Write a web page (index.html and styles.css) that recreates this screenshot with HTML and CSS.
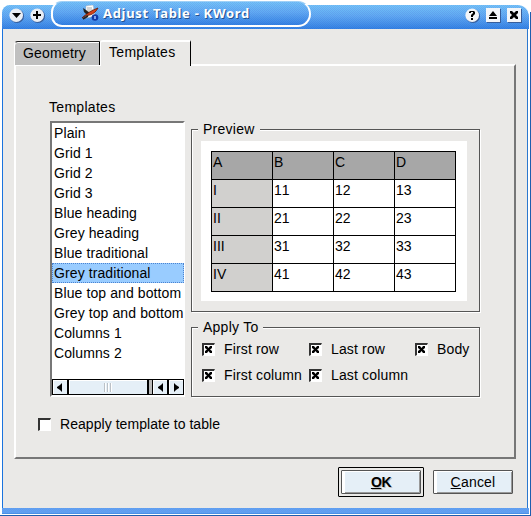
FILE: index.html
```html
<!DOCTYPE html>
<html lang="en">
<head>
<meta charset="utf-8">
<title>Adjust Table - KWord</title>
<link rel="stylesheet" href="styles.css">
</head>
<body>
<div class="window">
  <header class="titlebar">
    <div class="strip"></div>
    <div class="controls left">
      <svg width="15" height="15" viewBox="0 0 15 15"><circle cx="8" cy="8" r="7" fill="#365d9b"/><circle cx="7.2" cy="7.2" r="6.8" fill="#e9eef5"/><path d="M3 5h9L7.500 10z"/></svg>
      <svg width="15" height="15" viewBox="0 0 15 15"><circle cx="8" cy="8" r="7" fill="#365d9b"/><circle cx="7.200" cy="7.200" r="6.800" fill="#e9eef5"/><path d="M3 6h3V3h2v3h3v2H8v3H6V8H3z"/></svg>
    </div>
    <div class="caption">
      <svg class="appicon" width="17" height="16" viewBox="0 0 17 16"><path d="M4 1l7-1 2 11-9 2z" fill="#fff" stroke="#bbb" stroke-width=".5"/><path d="M5 3h5M5 5h6M6 7h5" stroke="#aaa"/><path d="M1 3l3 2 4 3-2 3-4-4z" fill="#222"/><path d="M0 13C4 9 10 5 16 3c-2 4-5 6-8 7-3 0-5 1-8 3z" fill="#d5421b" stroke="#651c08" stroke-width=".8"/><path d="M1 14l5-3" stroke="#222" stroke-width="1.500"/><circle cx="13" cy="12.500" r="3.300" fill="#123aa7"/><path d="M12 11h2v3h-2z" fill="#7da2ee"/></svg>
      <span class="title">Adjust Table - KWord</span>
    </div>
    <div class="controls right">
      <svg width="15" height="15" viewBox="0 0 15 15"><circle cx="8" cy="8" r="7" fill="#365d9b"/><circle cx="7.200" cy="7.200" r="6.800" fill="#f3f5f8"/><path d="M4 5V4l1-1h4l1 1v2L8 8v1H6V7l2-2V4H6v1zM6 10h2v2H6z"/></svg>
      <svg width="15" height="15" viewBox="0 0 15 15"><path d="M1 1h14v14H1z" fill="#365d9b"/><path d="M0 0h14v14H0z" fill="#f3f5f8"/><path d="M3 8l4-5 4 5zM3 9h8v2H3z"/></svg>
      <svg width="15" height="15" viewBox="0 0 15 15"><path d="M1 1h14v14H1z" fill="#365d9b"/><path d="M0 0h14v14H0z" fill="#f3f5f8"/><path d="M3 3h2l2 2 2-2h2v2L9 7l2 2v2H9L7 9l-2 2H3V9l2-2-2-2z"/></svg>
    </div>
  </header>

  <main class="client">
    <nav class="tabs">
      <div class="tab inactive"><span class="t-geo">Geometry</span></div>
      <div class="tab active"><span class="t-tpl">Templates</span></div>
    </nav>
    <section class="page">
      <div class="columns">
        <div class="listcol">
          <div class="listlabel">Templates</div>
          <div class="list">
            <ul>
              <li>Plain</li><li>Grid 1</li><li>Grid 2</li><li>Grid 3</li>
              <li>Blue heading</li><li>Grey heading</li><li>Blue traditional</li>
              <li class="selected">Grey traditional</li>
              <li>Blue top and bottom</li><li>Grey top and bottom</li>
              <li>Columns 1</li><li>Columns 2</li>
            </ul>
            <div class="scrollbar">
              <div class="sb btn"><svg width="5" height="9" viewBox="0 0 5 9"><path d="M5 0v9L3 7 0 5V4l3-2z"/></svg></div>
              <div class="sb thumb"><i></i><i></i><i></i></div>
              <div class="sb trough"></div>
              <div class="sb btn"><svg width="5" height="9" viewBox="0 0 5 9"><path d="M5 0v9L3 7 0 5V4l3-2z"/></svg></div>
              <div class="sb btn"><svg width="5" height="9" viewBox="0 0 5 9"><path d="M0 0v9l2-2 3-2V4L2 2z"/></svg></div>
            </div>
          </div>
        </div>
        <div class="rightcol">
          <div class="group preview">
            <div class="legend">Preview</div>
            <div class="canvas">
              <table>
                <tr><th>A</th><th>B</th><th>C</th><th>D</th></tr>
                <tr><td class="side">I</td><td>11</td><td>12</td><td>13</td></tr>
                <tr><td class="side">II</td><td>21</td><td>22</td><td>23</td></tr>
                <tr><td class="side">III</td><td>31</td><td>32</td><td>33</td></tr>
                <tr><td class="side">IV</td><td>41</td><td>42</td><td>43</td></tr>
              </table>
            </div>
          </div>
          <div class="group apply">
            <div class="legend">Apply To</div>
            <div class="checks">
              <div class="check"><b class="box"><svg width="7" height="7" viewBox="0 0 7 7"><path d="M0 0h2l1.500 2L5 0h2v2L5 3.500 7 5v2H5L3.500 5 2 7H0V5l2-1.500L0 2z"/></svg></b><span>First row</span></div>
              <div class="check"><b class="box"><svg width="7" height="7" viewBox="0 0 7 7"><path d="M0 0h2l1.500 2L5 0h2v2L5 3.500 7 5v2H5L3.500 5 2 7H0V5l2-1.500L0 2z"/></svg></b><span>Last row</span></div>
              <div class="check"><b class="box"><svg width="7" height="7" viewBox="0 0 7 7"><path d="M0 0h2l1.500 2L5 0h2v2L5 3.500 7 5v2H5L3.500 5 2 7H0V5l2-1.500L0 2z"/></svg></b><span>Body</span></div>
              <div class="check"><b class="box"><svg width="7" height="7" viewBox="0 0 7 7"><path d="M0 0h2l1.500 2L5 0h2v2L5 3.500 7 5v2H5L3.500 5 2 7H0V5l2-1.500L0 2z"/></svg></b><span>First column</span></div>
              <div class="check"><b class="box"><svg width="7" height="7" viewBox="0 0 7 7"><path d="M0 0h2l1.500 2L5 0h2v2L5 3.500 7 5v2H5L3.500 5 2 7H0V5l2-1.500L0 2z"/></svg></b><span>Last column</span></div>
            </div>
          </div>
        </div>
      </div>
      <div class="check reapply"><b class="box"></b><span>Reapply template to table</span></div>
    </section>
    <footer class="buttons">
      <div class="default"><div class="button ok"><span><u>O</u>K</span></div></div>
      <div class="button"><span><u>C</u>ancel</span></div>
    </footer>
  </main>
  <div class="bottomedge"></div>
</div>
</body>
</html>
```
FILE: styles.css
```css
* { box-sizing: border-box; }
body { margin: 0; background: #fff; color: #000; font: 14px/20px "Liberation Sans", sans-serif; letter-spacing: .1px; overflow: hidden; }
svg { display: block; }
span { white-space: nowrap; }

.window { width: 531px; height: 516px; padding-left: 2px; border-bottom: 1px solid #1e5eae; background: linear-gradient(#1e5eae, #1e5eae) 530px 12px / 1px 504px no-repeat; }

.titlebar { position: relative; height: 29px; display: flex; }
.strip, .caption {
  background-image:
    repeating-conic-gradient(rgba(90,110,215,.2) 0 25%, rgba(110,210,255,.12) 0 50%),
    linear-gradient(#74c4f8, #5ea8f2 45%, #2a7be0);
  background-size: 2px 2px, 100% 100%;
}
.strip { position: absolute; left: 0; right: 1px; top: 5px; bottom: 0; border-radius: 8px 12px 0 0; border-right: 1px solid #fff; }
.controls { position: relative; display: flex; }
.left { padding: 8px 0 0 7px; gap: 6px; width: 49px; }
.right { padding: 8px 0 0 154px; gap: 6px; }
.caption { position: relative; width: 260px; height: 26px; margin-top: 1px; border: 2px solid #fff; border-top: 1px solid #9fd0f6; border-radius: 11px 13px 13px 11px; display: flex; padding: 3px 0 0 29px; }
.title { margin-left: 4px; font: bold 13px/17px "Noto Sans", sans-serif; letter-spacing: .7px; color: #fff; text-shadow: 1px 1px 0 #24528f; }

.client { width: 526px; height: 479px; background: #eae9e7; border-left: 1px solid #1a73de; border-right: 1px solid #2b78cf; padding: 11px 11px 0; }
.bottomedge { width: 527px; height: 6px; background: repeating-conic-gradient(#6b8fee 0 25%, #55aef2 0 50%) 0 0 / 2px 2px; border-bottom: 1px solid #4a90e6; }

.tabs { display: flex; height: 26px; align-items: flex-start; margin-bottom: -2px; }
.tab { padding-left: 8px; }
.inactive { margin-top: 1px; width: 86px; height: 24px; background: #c0c0c0; border-left: 1px solid #fff; border-top: 1px solid #222; border-right: 1px solid #000; border-radius: 4px 0 0 0; line-height: 23px; box-shadow: inset 0 1px 0 #fff; }
.active { position: relative; width: 91px; height: 26px; background: #eae9e7; border-top: 2px solid #fff; border-left: 1px solid #fff; border-right: 1px solid #000; border-radius: 3px 0 0 0; line-height: 20px; letter-spacing: .3px; }
.t-geo { letter-spacing: .2px; }

.page { width: 502px; height: 395px; border: 2px solid; border-color: #fff #777 #777 #fff; padding: 29px 0 0 22px; }
.columns { display: flex; height: 302px; padding-left: 12px; gap: 6px; }
.listlabel { height: 26px; line-height: 24px; margin-left: -1px; letter-spacing: .3px; }
.list { width: 135px; height: 276px; background: #fff; border: 2px solid; border-color: #777 #fff #fff #777; }
ul { margin: 0; padding: 0; list-style: none; width: 132px; height: 256px; overflow: hidden; }
li { height: 20px; line-height: 21px; padding-left: 2px; white-space: nowrap; }
.selected { background: #99ccff; outline: 1px dotted #4c83d0; outline-offset: -1px; }
.scrollbar { display: flex; height: 16px; width: 132px; border: 1px solid #000; background: #e5eff7; }
.sb { display: flex; align-items: center; justify-content: center; border-right: 2px solid #000; box-shadow: inset 1px 1px 0 #fff; }
.btn { width: 16px; }
.btn:last-child { width: 14px; border: 0; }
.thumb { width: 81px; gap: 1px; }
.thumb i { width: 2px; height: 9px; background: #bbc1c7; border-right: 1px solid #fff; }
.trough { width: 4px; background: #bbb; border-right-width: 1px; box-shadow: none; }

.rightcol { width: 290px; padding-top: 34px; }
.group { border: 1px solid #555; box-shadow: inset 1px 1px 0 #fff, 1px 1px 0 #fff; width: 289px; }
.legend { width: max-content; height: 20px; margin: -11px 0 0 6px; padding: 0 5px; background: #eae9e7; letter-spacing: .25px; }
.preview { height: 183px; }
.canvas { width: 266px; height: 160px; margin: 2px 0 0 9px; background: #fff; padding: 10px; }
table { border-collapse: collapse; table-layout: fixed; width: 245px; height: 141px; }
tr { height: 28px; }
th, td { height: 28px; width: 61px; border: 1px solid #000; padding: 1px 0 0 1px; text-align: left; vertical-align: top; font-weight: normal; line-height: 18px; font-kerning: none; letter-spacing: 0; }
th { background: #a7a7a7; }
.side { background: #d1d0ce; }
.apply { height: 70px; margin-top: 15px; }
.checks { display: grid; grid-template-columns: 107px 106px 65px; grid-auto-rows: 26px; margin: -1px 0 0 10px; }
.check { display: flex; align-items: center; gap: 9px; height: 26px; }
.apply .check { letter-spacing: .15px; }
.box { flex: none; width: 13px; height: 13px; background: #fff; border: solid; border-width: 2px 1px 1px 2px; border-color: #333 #fff #fff #333; padding: 1px 0 0 1px; }
.reapply { height: 20px; margin-top: 17px; letter-spacing: .05px; }

.buttons { display: flex; justify-content: flex-end; align-items: center; gap: 9px; padding: 8px 3px 0 0; }
.default { border: 1px solid #000; padding: 2px; width: 86px; height: 30px; border-radius: 1px; }
.button { width: 80px; height: 24px; border: 1px solid #555; border-radius: 1px; box-shadow: inset 3px 1px 0 #fff, inset -1px -1px 0 #999; background: #e5eff7; display: flex; align-items: center; justify-content: center; letter-spacing: .2px; }
.ok { font-weight: bold; letter-spacing: -.4px; text-shadow: 1px 1px 0 #bbb; }
```
